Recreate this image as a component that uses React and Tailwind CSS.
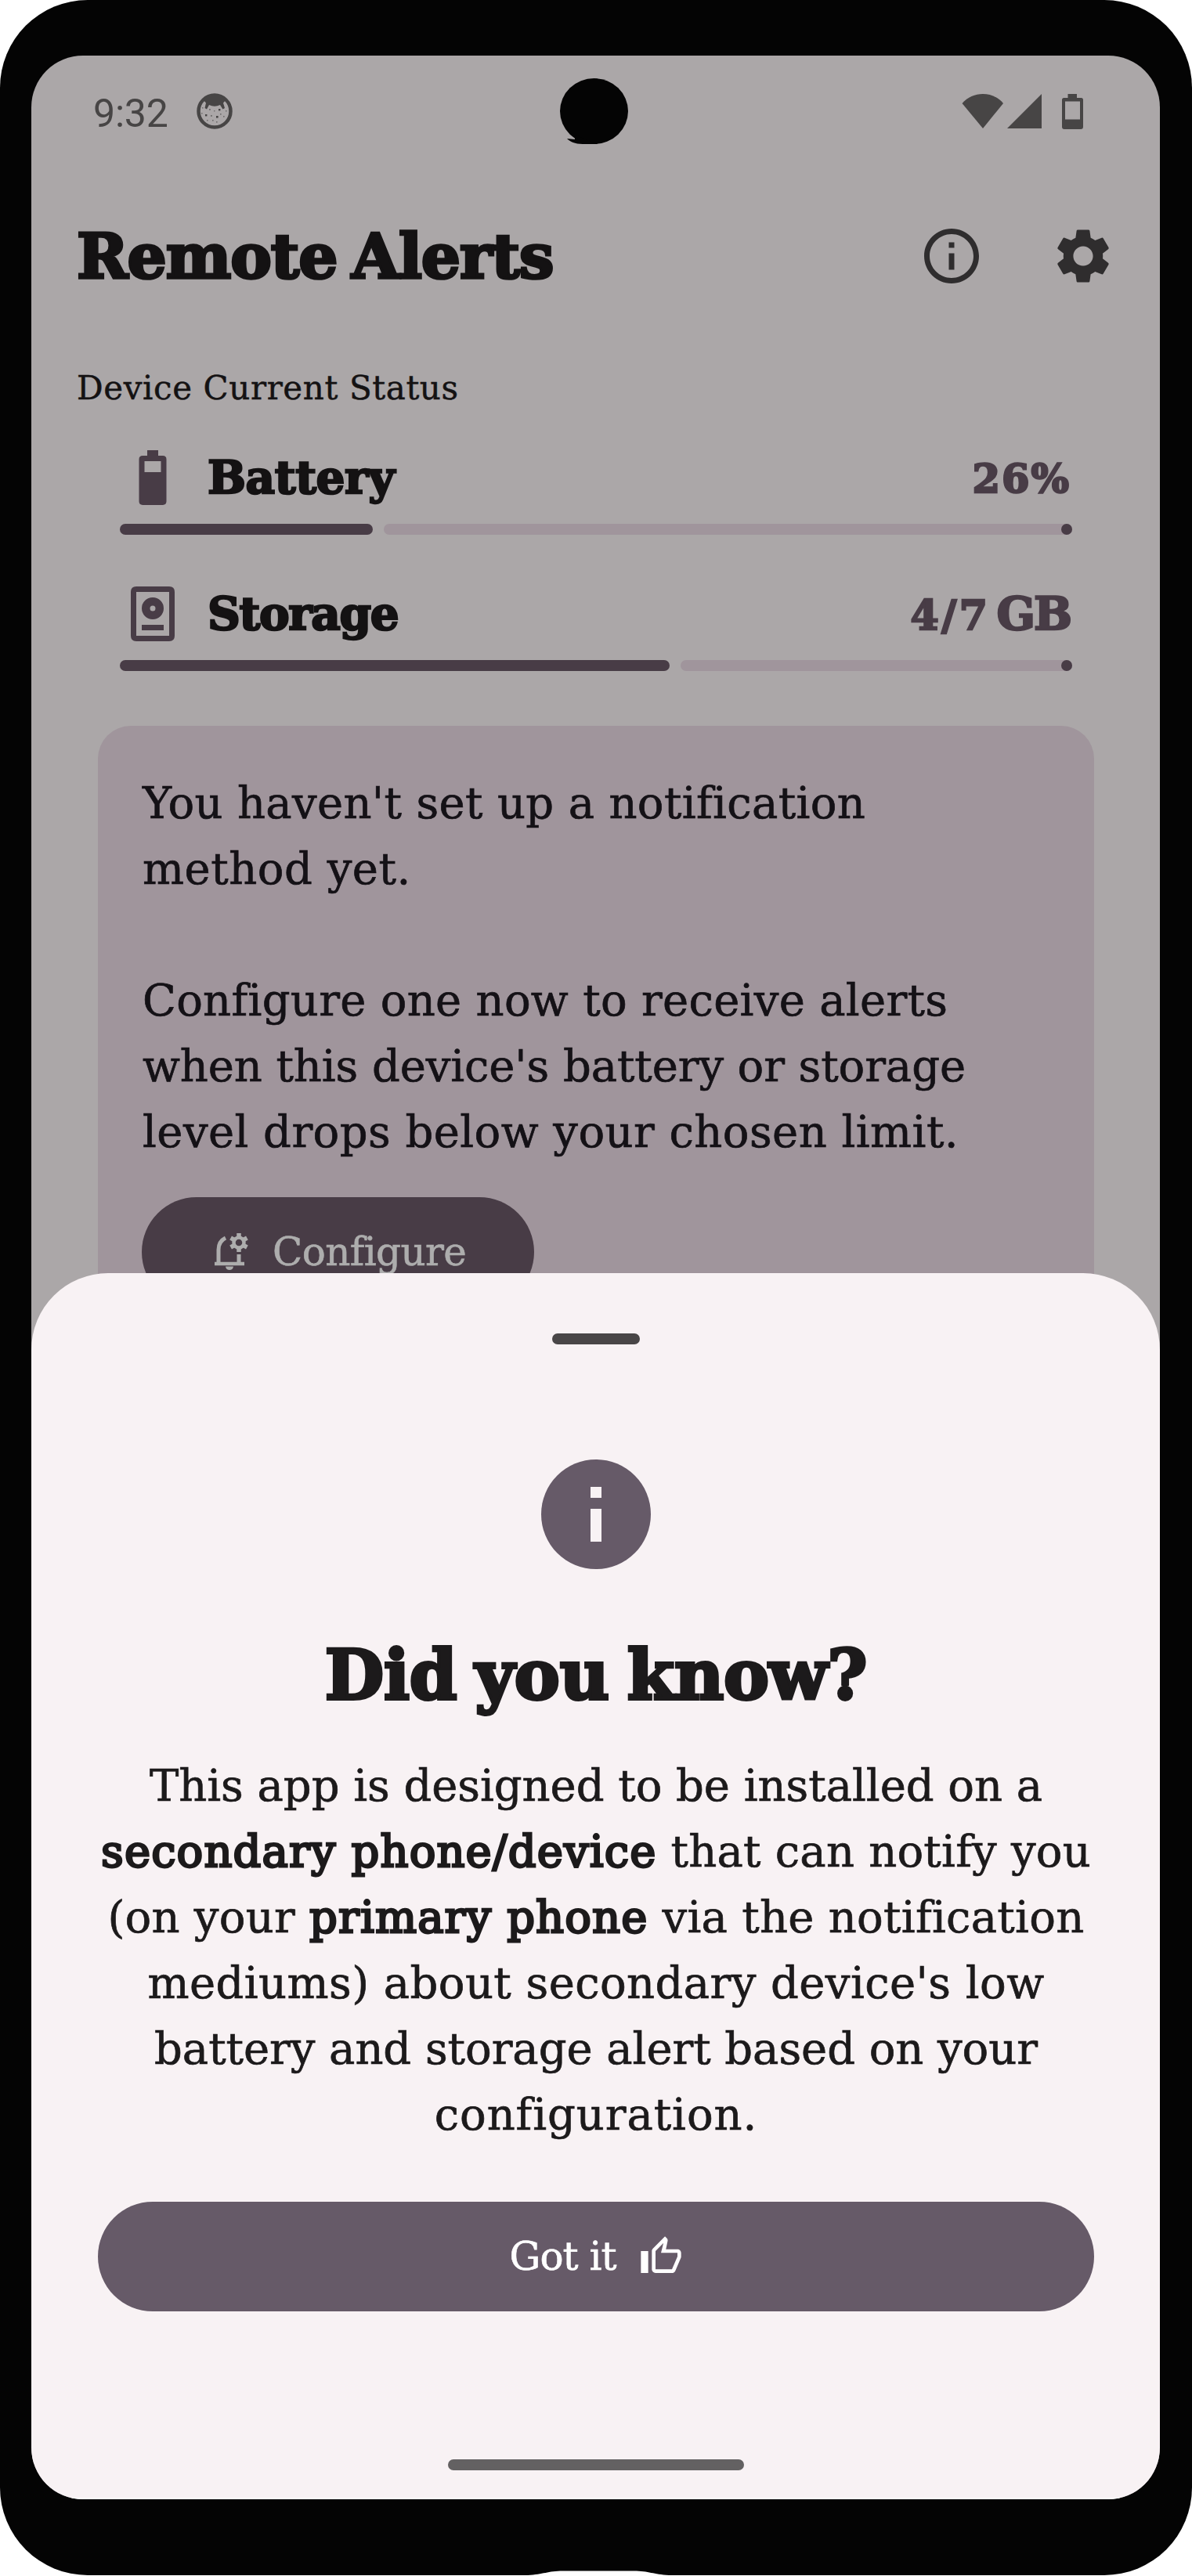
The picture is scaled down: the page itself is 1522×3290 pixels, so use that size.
const serif = "font-['DejaVu_Serif',serif]";
const slab = "font-['DejaVu_Serif',serif] font-bold whitespace-nowrap";

function AppNotificationIcon() {
  return (
    <svg viewBox="0 0 46 46" className="ml-[36px] size-[46px]" fill="#474545">
      <circle cx="23" cy="23" r="20.500" fill="none" stroke="#474545" strokeWidth="4.500" />
      <path d="M9 9C15 0 31 0 37 9L34 12.500L36 19L33.500 20.500L30 15Q23 18.500 16 15L13 20.500L10.500 19L12 12.500Z" />
      <rect x="11" y="27" width="2.400" height="2.400" />
      <rect x="25" y="29" width="2.600" height="2.600" />
      <rect x="28" y="20" width="2.400" height="2.400" />
      <g opacity="0.6">
        <rect x="7" y="18" width="1.500" height="1.500" />
        <rect x="6" y="25" width="1.500" height="1.500" />
        <rect x="16" y="20" width="1.800" height="1.800" />
        <rect x="37" y="22" width="1.500" height="1.500" />
        <rect x="18" y="28" width="1.800" height="1.800" />
        <rect x="22" y="22" width="1.400" height="1.400" />
        <rect x="30" y="26" width="1.600" height="1.600" />
        <rect x="34" y="29" width="1.600" height="1.600" />
        <rect x="13" y="34" width="1.500" height="1.500" />
        <rect x="20" y="34" width="1.600" height="1.600" />
        <rect x="25" y="36" width="1.600" height="1.600" />
      </g>
    </svg>
  );
}

function StatusBar() {
  return (
    <div className="relative flex h-[142px] items-center pl-[79px] pr-[98px]">
      <span className="pt-[6px] font-[Roboto,sans-serif] text-[50px] leading-none tracking-[-0.2px] text-[#474545]">
        9:32
      </span>
      <AppNotificationIcon />
      <svg viewBox="0 0 88 84" className="absolute left-[674px] top-[29px] h-[84px] w-[88px]" fill="#040404">
        <ellipse cx="44.500" cy="42" rx="43.500" ry="42" />
        <path d="M10 77L20 78V72L48 84H30C20 84 14 81 10 77Z" />
      </svg>
      <svg viewBox="0 0 155 46" className="ml-auto h-[46px] w-[155px]" fill="#474545">
        <path d="M0.500 13C14 -3 40 -3 53 13L27 45Z" />
        <path d="M58 45L102 1V45Z" />
        <path
          fillRule="evenodd"
          d="M135.500 1H147V6H152.500Q155 6 155 8.500V43Q155 46 152 46H131Q128 46 128 43V8.500Q128 6 130.500 6H135.500ZM132 10.500V33.500H151V10.500Z"
        />
      </svg>
    </div>
  );
}

function Header() {
  return (
    <div className="flex h-[228px] items-center pl-[58px] pr-[56px]">
      <h1
        className={`${slab} text-[79px] leading-none tracking-[-1.100px] [word-spacing:-8px] text-[#141213] [-webkit-text-stroke:3.500px_#141213]`}
      >
        Remote Alerts
      </h1>
      <svg viewBox="0 0 24 24" className="ml-auto size-[84px]" fill="#2f2d2e">
        <path d="M11 7h2v2h-2zm0 4h2v6h-2zm1-9C6.480 2 2 6.480 2 12s4.480 10 10 10 10-4.480 10-10S17.520 2 12 2zm0 18c-4.410 0-8-3.590-8-8s3.590-8 8-8 8 3.590 8 8-3.590 8-8 8z" />
      </svg>
      <svg viewBox="0 0 24 24" className="ml-[84px] size-[84px]" fill="#2f2d2e">
        <path d="M19.140 12.940c.04-.3.06-.61.06-.94 0-.32-.02-.64-.07-.94l2.030-1.580c.18-.14.23-.41.12-.61l-1.920-3.320c-.12-.22-.37-.29-.59-.22l-2.390.96c-.5-.38-1.030-.7-1.620-.94l-.36-2.540c-.04-.24-.24-.41-.48-.41h-3.840c-.24 0-.43.17-.47.41l-.36 2.540c-.59.24-1.130.57-1.620.94l-2.390-.96c-.22-.08-.47 0-.59.22L2.740 8.870c-.12.21-.08.47.12.61l2.030 1.580c-.05.3-.09.63-.09.94s.02.64.07.94l-2.030 1.580c-.18.14-.23.41-.12.61l1.920 3.320c.12.22.37.29.59.22l2.390-.96c.5.38 1.030.7 1.620.94l.36 2.540c.05.24.24.41.48.41h3.840c.24 0 .44-.17.47-.41l.36-2.540c.59-.24 1.130-.56 1.620-.94l2.390.96c.22.08.47 0 .59-.22l1.920-3.320c.12-.22.07-.47-.12-.61l-2.010-1.580zM12 15.600c-1.980 0-3.600-1.620-3.600-3.600s1.620-3.600 3.600-3.600 3.600 1.620 3.600 3.600-1.620 3.600-3.600 3.600z" />
      </svg>
    </div>
  );
}

function Meter({ fill }) {
  return (
    <div className="mt-[17px] flex h-[14px] gap-[14px]">
      <div className={`${fill} rounded-full bg-[#483c46]`} />
      <div className="flex grow justify-end rounded-full bg-[#a0959c]">
        <div className="size-[14px] rounded-full bg-[#483c46]" />
      </div>
    </div>
  );
}

const rowLabel = `${slab} ml-[28px] leading-[84px] text-[#141213] [-webkit-text-stroke:2.500px_#141213]`;
const rowValue = `${slab} ml-auto leading-[84px] text-[#483c46] [-webkit-text-stroke:2.500px_#483c46]`;

function DeviceStatus() {
  return (
    <section>
      <h2
        className={`${serif} flex h-[109px] items-center pl-[58px] text-[42px] tracking-[0.600px] text-[#141213] [-webkit-text-stroke:0.500px_#141213]`}
      >
        Device Current Status
      </h2>
      <div className="mt-[18px] pl-[113px] pr-[112px]">
        <div className="flex h-[84px]">
          <svg viewBox="0 0 24 24" className="size-[84px]" fill="#483c46">
            <path
              fillRule="evenodd"
              d="M10 2H14V4H15.670Q17 4 17 5.330V20.670Q17 22 15.670 22H8.330Q7 22 7 20.670V5.330Q7 4 8.330 4H10ZM9 6V10H15V6Z"
            />
          </svg>
          <span className={`${rowLabel} text-[58px] tracking-[-0.400px]`}>Battery</span>
          <span className={`${rowValue} pt-px pr-[2px] text-[51px] tracking-[2px]`}>26%</span>
        </div>
        <Meter fill="w-[323px]" />
        <div className="mt-[59px] flex h-[84px]">
          <svg viewBox="0 0 24 24" className="size-[84px]" fill="#483c46">
            <path
              fillRule="evenodd"
              d="M6 2H18Q20 2 20 4V20Q20 22 18 22H6Q4 22 4 20V4Q4 2 6 2ZM6 4V20H18V4ZM8 16H16V18H8ZM12 6A4 4 0 1 1 12 14A4 4 0 1 1 12 6ZM12 9A1 1 0 1 0 12 11A1 1 0 1 0 12 9Z"
            />
          </svg>
          <span className={`${rowLabel} text-[58px] tracking-[-1.400px]`}>Storage</span>
          <span className={`${rowValue} pr-[2px] text-[58px]`}>
            <span className="text-[52px] tracking-[3.500px]">4/7</span>
            <span className="ml-[8px] tracking-[-2px]">GB</span>
          </span>
        </div>
        <Meter fill="w-[702px]" />
      </div>
    </section>
  );
}

function SetupCard() {
  return (
    <section className="mt-[70px] ml-[85px] mr-[84px] h-[900px] rounded-[42px] bg-[#a0959c] pl-[56px] pt-[57px]">
      <p
        className={`${serif} pl-px text-[56px] leading-[84px] whitespace-nowrap text-[#141116] [-webkit-text-stroke:0.700px_#141116]`}
      >
        <span className="block tracking-[0.320px]">You haven't set up a notification</span>
        <span className="block tracking-[0.500px]">method yet.</span>
        <span className="mt-[84px] block tracking-[0.280px]">Configure one now to receive alerts</span>
        <span className="block tracking-[-0.110px]">when this device's battery or storage</span>
        <span className="block tracking-[0.430px]">level drops below your chosen limit.</span>
      </p>
      <button className="mt-[41px] flex h-[140px] w-[501px] items-center rounded-full bg-[#483c46] pl-[90px] text-[#adadad]">
        <svg viewBox="0 0 48 50" className="h-[50px] w-[48px]" fill="none" stroke="currentColor">
          <path d="M3 40H41" strokeWidth="4.500" />
          <path d="M8 39V22C8 14 11 10 17 7M34 28V39" strokeWidth="5" />
          <path d="M17 43.500H27C26.500 49.500 17.500 49.500 17 43.500Z" fill="currentColor" stroke="none" />
          <circle cx="34" cy="13" r="6.500" strokeWidth="4.500" />
          <path
            d="M34 1V6M34 20V25M23.600 7L28 9.500M40 16.500L44.400 19M23.600 19L28 16.500M40 9.500L44.400 7"
            strokeWidth="5.500"
          />
        </svg>
        <span
          className={`${serif} ml-[29px] text-[50px] leading-[84px] tracking-[-0.600px] [-webkit-text-stroke:0.600px_#adadad]`}
        >
          Configure
        </span>
      </button>
    </section>
  );
}

const strongText =
  "font-normal tracking-[1.100px] [-webkit-text-stroke:2.800px_#1c1a1b]";

function InfoSheet() {
  return (
    <section className="absolute inset-x-0 bottom-0 flex h-[1566px] flex-col items-center rounded-t-[98px] border-b-2 border-white bg-[#f8f2f4] pl-[85px] pr-[84px]">
      <div className="mt-[77px] h-[14px] w-[112px] shrink-0 rounded-full bg-[#494647]" />
      <svg viewBox="0 0 20 20" className="mt-[147px] size-[140px] shrink-0">
        <circle cx="10" cy="10" r="10" fill="#665a68" />
        <path d="M9 5h2v2h-2zM9 9h2v6h-2z" fill="#f8f2f4" />
      </svg>
      <h2
        className={`${slab} mt-[86px] text-[87px] leading-[100px] tracking-[-0.200px] [word-spacing:-7px] text-[#1c1a1b] [-webkit-text-stroke:4px_#1c1a1b]`}
      >
        Did you know?
      </h2>
      <p
        className={`${serif} mt-[49px] text-center text-[56px] leading-[84px] whitespace-nowrap text-[#1c1a1b] [-webkit-text-stroke:0.700px_#1c1a1b]`}
      >
        <span className="block tracking-[-0.060px]">This app is designed to be installed on a</span>
        <span className="block tracking-[0.200px]">
          <strong className={strongText}>secondary phone/device</strong> that can notify you
        </span>
        <span className="block tracking-[0.250px]">
          (on your <strong className={strongText}>primary phone</strong> via the notification
        </span>
        <span className="block tracking-[0.410px]">mediums) about secondary device's low</span>
        <span className="block tracking-[-0.070px]">battery and storage alert based on your</span>
        <span className="block tracking-[0.900px]">configuration.</span>
      </p>
      <button className="mt-[69px] flex h-[140px] w-full shrink-0 items-center justify-center gap-[29px] rounded-full bg-[#665a68] text-white">
        <span
          className={`${serif} text-[50px] leading-[84px] tracking-[-1px] [-webkit-text-stroke:0.600px_white]`}
        >
          Got it
        </span>
        <svg viewBox="0 0 24 24" className="size-[56px]" fill="currentColor">
          <path d="M9 21h9c.83 0 1.540-.5 1.840-1.220l3.020-7.050c.09-.23.14-.47.14-.73v-2c0-1.100-.9-2-2-2h-6.310l.95-4.570.03-.32c0-.41-.17-.79-.44-1.060L14.170 1 7.580 7.590C7.220 7.950 7 8.450 7 9v10c0 1.100.9 2 2 2zM9 9l4.340-4.340L12 10h9v2l-3 7H9V9zM1 9h4v12H1z" />
        </svg>
      </button>
      <div className="mt-[189px] h-[14px] w-[378px] shrink-0 rounded-full bg-[#636162]" />
    </section>
  );
}

export default function App() {
  return (
    <div className="h-[3290px] w-[1522px] bg-white">
      <div className="relative h-[3289px] rounded-[112px] bg-[#040404] pt-[71px] pl-[40px]">
        <main className="relative h-[3121px] w-[1441px] overflow-hidden rounded-[66px] bg-[#aba7a8]">
          <StatusBar />
          <Header />
          <DeviceStatus />
          <SetupCard />
          <InfoSheet />
        </main>
        <svg viewBox="0 0 180 6" className="absolute bottom-0 left-[674px] h-[6px] w-[180px]" fill="white">
          <path d="M0 6C20 5 25 0.500 45 0.500H135C155 0.500 160 5 180 6Z" />
        </svg>
      </div>
    </div>
  );
}
